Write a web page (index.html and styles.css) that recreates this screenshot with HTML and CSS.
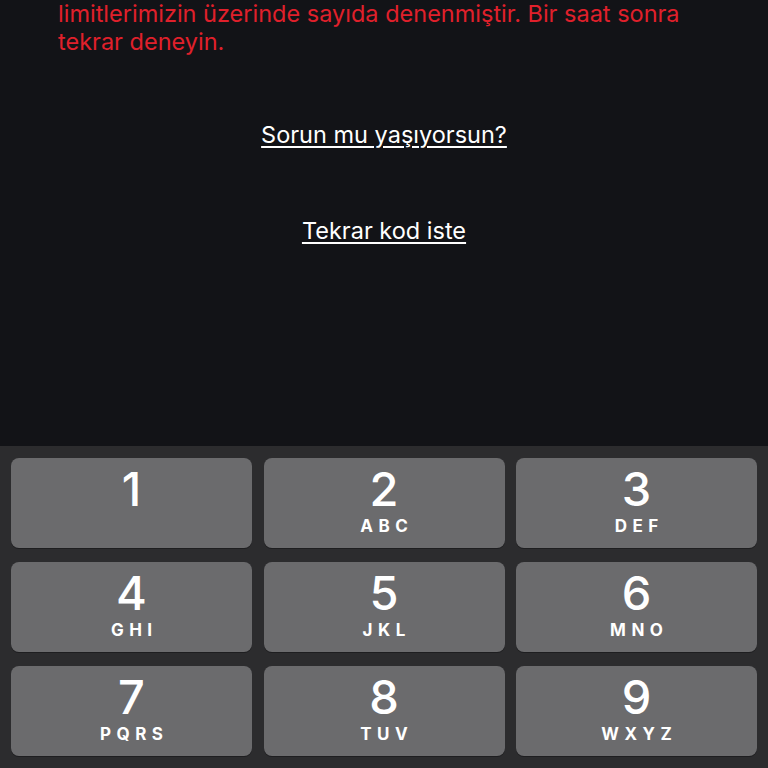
FILE: index.html
```html
<!DOCTYPE html>
<html lang="tr">
<head>
<meta charset="utf-8">
<link rel="stylesheet" href="styles.css">
</head>
<body>
<main class="screen">
  <section class="content">
    <p class="error">limitlerimizin üzerinde sayıda denenmiştir. Bir saat sonra tekrar deneyin.</p>
    <a class="link link-first" href="#">Sorun mu yaşıyorsun?</a>
    <a class="link link-second" href="#">Tekrar kod iste</a>
  </section>
  <section class="keypad">
    <div class="key"><span class="digit">1</span></div>
    <div class="key"><span class="digit">2</span><span class="letters">ABC</span></div>
    <div class="key"><span class="digit">3</span><span class="letters">DEF</span></div>
    <div class="key"><span class="digit">4</span><span class="letters">GHI</span></div>
    <div class="key"><span class="digit">5</span><span class="letters">JKL</span></div>
    <div class="key"><span class="digit">6</span><span class="letters">MNO</span></div>
    <div class="key"><span class="digit">7</span><span class="letters">PQRS</span></div>
    <div class="key"><span class="digit">8</span><span class="letters">TUV</span></div>
    <div class="key"><span class="digit">9</span><span class="letters">WXYZ</span></div>
  </section>
</main>
</body>
</html>
```

FILE: styles.css
```css
* { box-sizing: border-box; }
html, body {
  margin: 0;
  padding: 0;
  width: 768px;
  height: 768px;
  overflow: hidden;
  background: #121317;
  font-family: Inter, "Noto Sans", sans-serif;
}
.screen {
  display: flex;
  flex-direction: column;
  height: 768px;
}
.content {
  height: 446px;
  display: flex;
  flex-direction: column;
  align-items: center;
  overflow: hidden;
}
.error {
  align-self: stretch;
  margin: 0;
  padding: 0 58px;
  color: #e0202b;
  font-size: 23.5px;
  line-height: 28px;
  letter-spacing: 0;
}
.link {
  color: #ffffff;
  font-size: 23.5px;
  line-height: 28px;
  text-decoration: underline;
  text-underline-offset: 3px;
  text-decoration-thickness: 1.5px;
}
.link-first { margin-top: 65px; }
.link-second { margin-top: 68px; }
.keypad {
  flex: 1;
  background: #2c2c2e;
  padding: 12px 11px 12px 11px;
  display: grid;
  grid-template-columns: repeat(3, 241px);
  grid-template-rows: repeat(3, 90px);
  column-gap: 11.5px;
  row-gap: 14px;
}
.key {
  background: #6b6b6d;
  border-radius: 8px;
  box-shadow: 0 1px 0 #1e1e20;
  display: flex;
  flex-direction: column;
  align-items: center;
  padding-top: 5px;
  color: #ffffff;
}
.digit {
  font-size: 47px;
  line-height: 52px;
  font-weight: 500;
}
.letters {
  font-size: 17px;
  line-height: 18px;
  font-weight: 700;
  letter-spacing: 5.5px;
  margin-right: -5.5px;
  margin-top: 2px;
}
```
